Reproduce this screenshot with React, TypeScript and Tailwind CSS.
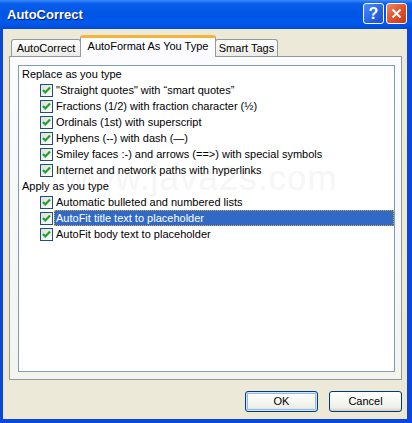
import React from "react"

const font = { fontFamily: '"Liberation Sans", Arial, sans-serif' }

function CheckBox() {
  return (
    <svg width="13" height="13" viewBox="0 0 13 13" className="shrink-0">
      <defs>
        <linearGradient id="cbg" x1="0" y1="0" x2="1" y2="1">
          <stop offset="0" stopColor="#DCDCD7" />
          <stop offset="1" stopColor="#FFFFFF" />
        </linearGradient>
      </defs>
      <rect x="0.5" y="0.5" width="12" height="12" fill="url(#cbg)" stroke="#1C5180" />
      <polyline points="3,6 5.3,8.5 10,3.6" fill="none" stroke="#21A121" strokeWidth="2.2" />
    </svg>
  )
}

function Row({ label, selected }: { label: string; selected?: boolean }) {
  return (
    <div className="h-[16px] flex items-center pl-[21px]">
      <CheckBox />
      <div
        className={
          selected
            ? "ml-[1px] flex-1 h-[16px] flex items-center pl-[2px] bg-[#316AC5] text-white outline outline-1 outline-dotted outline-[#D9A441] -outline-offset-1"
            : "ml-[3px] text-black"
        }
      >
        {label}
      </div>
    </div>
  )
}

function Header({ label }: { label: string }) {
  return <div className="h-[16px] flex items-center pl-[3px]">{label}</div>
}

export default function App() {
  const replace = [
    "\"Straight quotes\" with \u201Csmart quotes\u201D",
    "Fractions (1/2) with fraction character (\u00BD)",
    "Ordinals (1st) with superscript",
    "Hyphens (--) with dash (\u2014)",
    "Smiley faces :-) and arrows (==>) with special symbols",
    "Internet and network paths with hyperlinks",
  ]

  return (
    <div className="w-[412px] h-[423px] bg-[#0B47DA] flex flex-col text-[11px] select-none" style={font}>
      {/* title bar */}
      <div className="h-[29px] shrink-0 flex items-center pl-[7px] pr-[5px] bg-[linear-gradient(to_bottom,#3C8CFB_0%,#0A5EEB_12%,#0055E5_45%,#0058EC_80%,#0049D6_100%)]">
        <div className="flex-1 text-white font-bold text-[13px] [text-shadow:1px_1px_0_#0A1E6E]">AutoCorrect</div>
        <div className="flex gap-[2px] -mt-[2px]">
          <div className="w-[21px] h-[21px] rounded-[3px] border border-white bg-[linear-gradient(135deg,#4C8DF6,#2663E0_60%,#1A50D0)] flex items-center justify-center text-white font-bold text-[16px]">
            ?
          </div>
          <div className="w-[21px] h-[21px] rounded-[3px] border border-white bg-[linear-gradient(135deg,#E88B6A,#E0542C_50%,#C8381A)] flex items-center justify-center">
            <svg width="11" height="11" viewBox="0 0 11 11">
              <path d="M1.5 1.5 L9.5 9.5 M9.5 1.5 L1.5 9.5" stroke="white" strokeWidth="2" />
            </svg>
          </div>
        </div>
      </div>

      {/* body */}
      <div className="flex-1 ml-[3px] mr-[5px] mb-[4px] bg-[#ECE9D8] flex flex-col pt-[6px] pl-[6px] pr-[5px]">
        {/* tabs */}
        <div className="flex items-end h-[21px] pl-[2px] relative z-10">
          <div className="w-[70px] h-[17px] border border-b-0 border-[#919B9C] rounded-t-[3px] bg-[linear-gradient(to_bottom,#FFFFFF,#ECEBE6)] flex items-center justify-center">
            AutoCorrect
          </div>
          <div className="w-[136px] h-[22px] -mb-[1px] -ml-[1px] border border-b-0 border-[#919B9C] border-t-[3px] border-t-[#F4B43A] rounded-t-[3px] bg-[#FCFCFE] flex items-center justify-center pb-[2px]">
            AutoFormat As You Type
          </div>
          <div className="w-[63px] h-[17px] -ml-[1px] border border-b-0 border-[#919B9C] rounded-t-[3px] bg-[linear-gradient(to_bottom,#FFFFFF,#ECEBE6)] flex items-center justify-center">
            Smart Tags
          </div>
        </div>

        {/* tab panel */}
        <div className="h-[324px] border border-[#919B9C] bg-[linear-gradient(to_bottom,#FCFCFE,#F4F3EE)] pt-[8px] pl-[8px] pr-[6px] pb-[7px] flex">
          <div className="flex-1 border border-[#7F9DB9] bg-white relative">
            <div className="absolute left-[44px] top-[94px] text-[35px] leading-none tracking-[1px] text-[#F6F6F6] pointer-events-none">
              www.java2s.com
            </div>
            <div className="relative">
              <Header label="Replace as you type" />
              {replace.map((r) => (
                <Row key={r} label={r} />
              ))}
              <Header label="Apply as you type" />
              <Row label="Automatic bulleted and numbered lists" />
              <Row label="AutoFit title text to placeholder" selected />
              <Row label="AutoFit body text to placeholder" />
            </div>
          </div>
        </div>

        {/* buttons */}
        <div className="flex justify-end gap-[11px] mt-[11px]">
          <button className="w-[73px] h-[21px] rounded-[3px] border border-[#003C74] bg-[linear-gradient(to_bottom,#FFFFFF,#F0F0EA_80%,#D6D0C5)] shadow-[inset_0_0_0_1px_#CEE7FF,inset_0_0_0_2px_#98B8EA] text-black text-[11px]">
            OK
          </button>
          <button className="w-[73px] h-[21px] rounded-[3px] border border-[#003C74] bg-[linear-gradient(to_bottom,#FFFFFF,#F0F0EA_80%,#D6D0C5)] text-black text-[11px]">
            Cancel
          </button>
        </div>
      </div>
    </div>
  )
}
